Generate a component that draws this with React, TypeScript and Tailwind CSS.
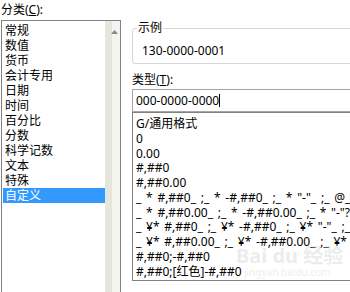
import React from "react";

const cats = ["常规", "数值", "货币", "会计专用", "日期", "时间", "百分比", "分数", "科学记数", "文本", "特殊", "自定义"];
const fmts = [
  "G/通用格式",
  "0",
  "0.00",
  "#,##0",
  "#,##0.00",
  '_ * #,##0_ ;_ * -#,##0_ ;_ * "-"_ ;_ @_',
  '_ * #,##0.00_ ;_ * -#,##0.00_ ;_ * "-"??_ ;_ @_',
  '_ ¥* #,##0_ ;_ ¥* -#,##0_ ;_ ¥* "-"_ ;_ @_',
  '_ ¥* #,##0.00_ ;_ ¥* -#,##0.00_ ;_ ¥* "-"??_ ;_ @_',
  "#,##0;-#,##0",
  "#,##0;[红色]-#,##0",
];

export default function App() {
  return (
    <div className="relative w-[350px] h-[292px] overflow-hidden bg-white flex text-[12px] text-black font-['Noto_Sans','Noto_Sans_CJK_SC',sans-serif]">
      <div className="w-[121px] flex flex-col shrink-0">
        <div className="h-[20px] leading-[20px] pl-[1px] whitespace-pre">
          分类(<span className="underline">C</span>):
        </div>
        <div className="ml-[1px] w-[120px] flex-1 border border-b-0 border-[#828282] flex">
          <div className="flex-1 pt-[2px] pl-[1px]">
            {cats.map((c, i) => (
              <div
                key={c}
                className={
                  i === cats.length - 1
                    ? "h-[15px] leading-[15px] pl-[2px] bg-[#3399ff] text-white"
                    : "h-[15px] leading-[15px] pl-[2px]"
                }
              >
                {c}
              </div>
            ))}
          </div>
          <div className="w-[15px] flex">
            <div className="w-[7px] bg-[#e6e6dd]"></div>
            <div className="w-[8px] bg-[#f4f4f1] relative">
              <svg className="absolute left-[-1px] top-[9px]" width="7" height="4" viewBox="0 0 7 4">
                <polygon points="3.5,0 7,4 0,4" fill="#8a8a8a" />
              </svg>
            </div>
          </div>
        </div>
      </div>
      <div className="ml-[11px] w-[240px] shrink-0 flex flex-col">
        <div className="mt-[28px] h-[36px] border border-[#d5d5d5] rounded-[3px] relative pl-[9px] pt-[14px]">
          <div className="absolute left-[4px] top-[-8px] leading-[14px] px-[1px] bg-white">示例</div>
          <div className="leading-[16px]">130-0000-0001</div>
        </div>
        <div className="mt-[8px] leading-[16px] whitespace-pre">
          类型(<span className="underline">T</span>):
        </div>
        <div className="mt-[1px] h-[23px] border border-[#a6a6a6] flex items-center pl-[3px]">
          <span>000-0000-0000</span>
          <span className="inline-block w-[1px] h-[13px] bg-black"></span>
        </div>
        <div className="h-[169px] border border-[#828282] pt-[4px] pl-[3px] overflow-hidden">
          {fmts.map((f) => (
            <div key={f} className="h-[14.75px] leading-[14.75px] whitespace-pre [word-spacing:1.6px]">
              {f}
            </div>
          ))}
        </div>
      </div>
      <div className="absolute left-[236px] top-[245px] pointer-events-none text-[rgba(200,200,200,0.35)] font-bold">
        <div className="text-[20px] leading-[22px] whitespace-pre">Bai du 经验</div>
        <div className="text-[10px] leading-[10px] pl-[8px] font-normal">jingyan.baidu.com</div>
      </div>
    </div>
  );
}
